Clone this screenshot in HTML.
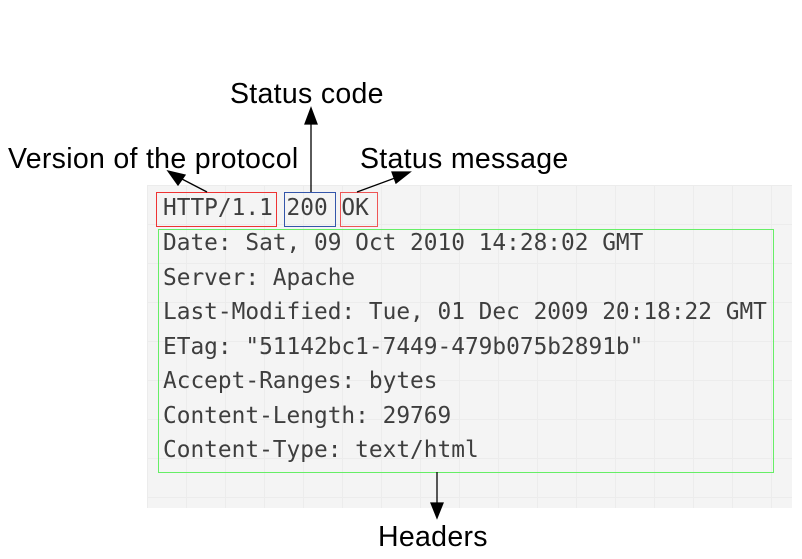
<!DOCTYPE html>
<html><head><style>
body{margin:0;width:802px;height:559px;background:#fff;position:relative;overflow:hidden;font-family:"Liberation Sans",sans-serif}
.panel{position:absolute;left:147px;top:185px;width:645px;height:323px;background-color:#f4f4f4;
background-image:linear-gradient(#ececec 1px,transparent 1px),linear-gradient(90deg,#ececec 1px,transparent 1px);background-size:39px 39px}
.lbl{position:absolute;font-size:28.5px;color:#000;white-space:nowrap;line-height:1;letter-spacing:0.3px}
.mono{position:absolute;font-family:"DejaVu Sans Mono","Liberation Mono",monospace;font-size:22.8px;color:#3e3e3e;white-space:pre;line-height:34.5px}
.box{position:absolute;border:1.5px solid}
</style></head><body>
<div class="panel"></div>
<div class="lbl" style="left:230px;top:80px">Status code</div>
<div class="lbl" style="left:8px;top:145px">Version of the protocol</div>
<div class="lbl" style="left:360px;top:145px">Status message</div>
<div class="lbl" style="left:378px;top:523px">Headers</div>
<div class="box" style="left:156px;top:192px;width:119px;height:33px;border-color:#e33"></div>
<div class="box" style="left:284px;top:192px;width:50px;height:33px;border-color:#3355aa"></div>
<div class="box" style="left:340px;top:192px;width:36px;height:33px;border-color:#e55"></div>
<div class="box" style="left:158px;top:229px;width:614px;height:242px;border-color:#6e6"></div>
<div class="mono" style="left:163px;top:192px;line-height:33px">HTTP/1.1 200 OK</div>
<div class="mono" style="left:163px;top:226px">Date: Sat, 09 Oct 2010 14:28:02 GMT
Server: Apache
Last-Modified: Tue, 01 Dec 2009 20:18:22 GMT
ETag: "51142bc1-7449-479b075b2891b"
Accept-Ranges: bytes
Content-Length: 29769
Content-Type: text/html</div>
<svg width="802" height="559" style="position:absolute;left:0;top:0">
<g stroke="#000" stroke-width="1.3" fill="#000">
<line x1="311" y1="192" x2="311" y2="122"/><polygon points="311,108 305,124 317,124" />
<line x1="207" y1="192" x2="180" y2="178"/><polygon points="168,171 178,185 185,175"/>
<line x1="357" y1="192" x2="395" y2="178"/><polygon points="410,172 392,172 396,183"/>
<line x1="437" y1="472" x2="437" y2="505"/><polygon points="437,518 431,503 443,503"/>
</g></svg>
</body></html>
